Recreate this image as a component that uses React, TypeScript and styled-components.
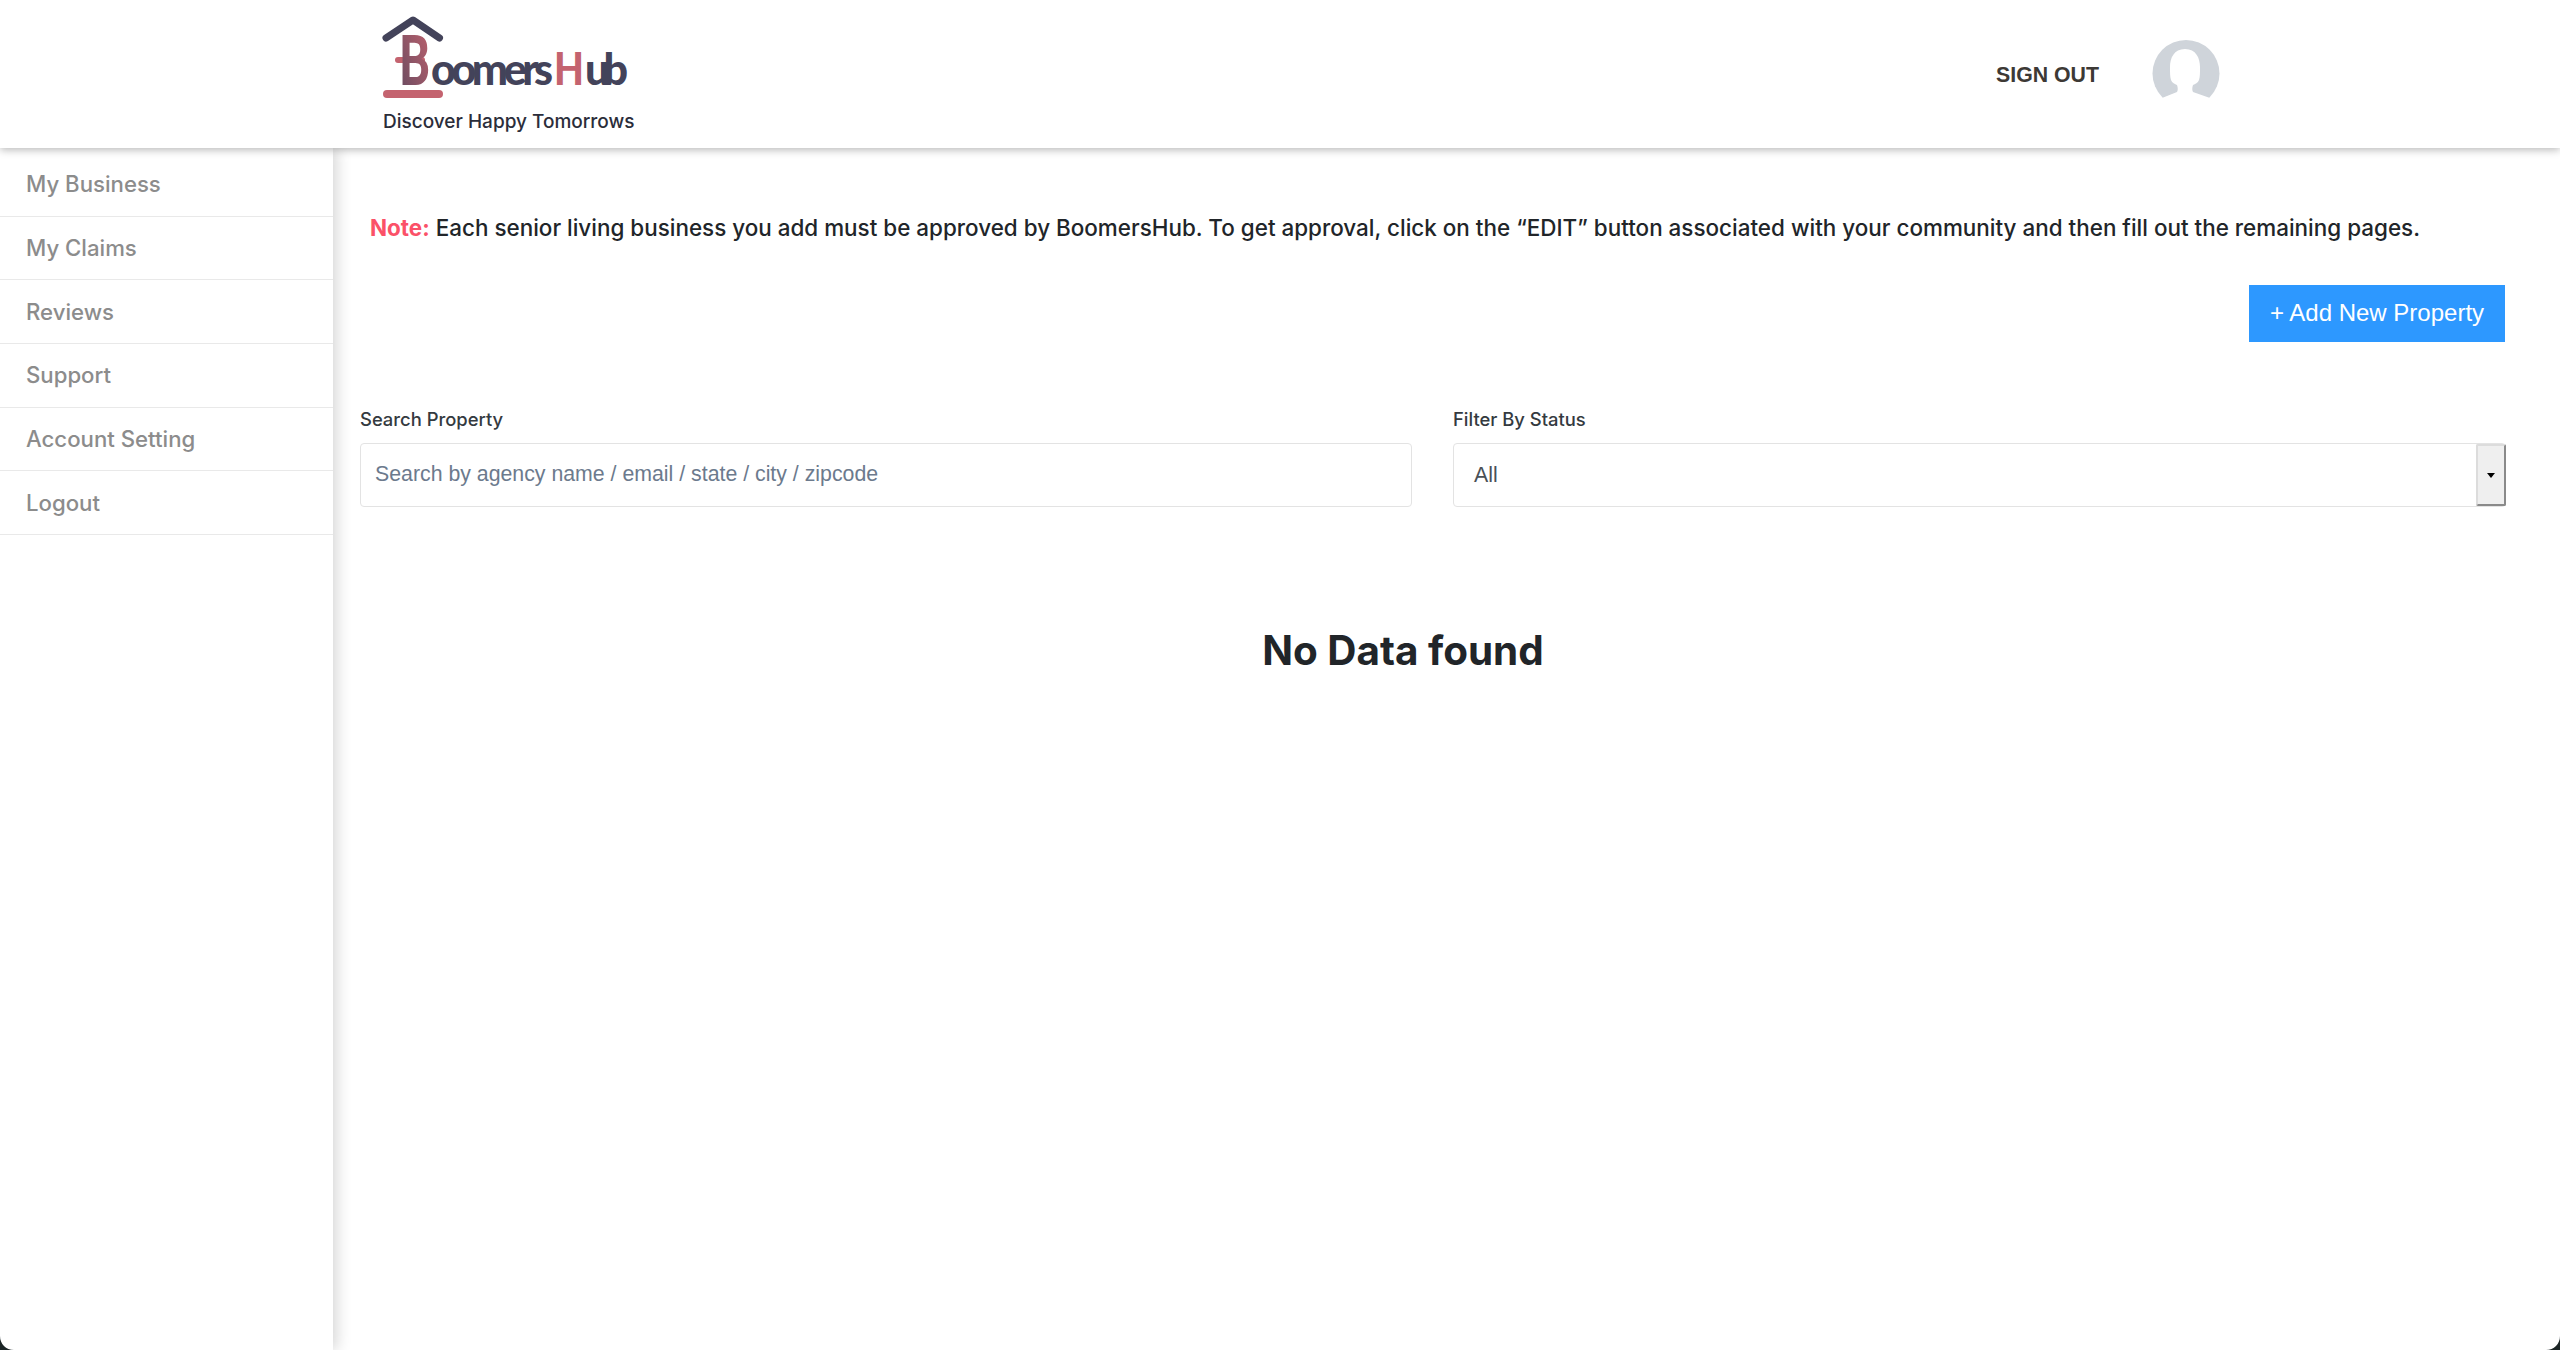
import React from 'react'
import styled, { createGlobalStyle } from 'styled-components'

const menuItems = ['My Business', 'My Claims', 'Reviews', 'Support', 'Account Setting', 'Logout']

const GlobalStyle = createGlobalStyle`
  html, body {
    margin: 0;
    padding: 0;
    background: #fff;
    font-family: 'Inter', 'Liberation Sans', sans-serif;
  }
  * {
    box-sizing: border-box;
  }
`

const Page = styled.div`
  width: 2560px;
  height: 1350px;
  overflow: hidden;
  position: relative;
  display: flex;
  flex-direction: column;
  background: #fff;
`

const Corner = styled.svg<{ $right?: boolean }>`
  position: absolute;
  bottom: 0;
  ${props => (props.$right ? 'right: 0; transform: scaleX(-1);' : 'left: 0;')}
  width: 14px;
  height: 14px;
  z-index: 5;
`

const Header = styled.header`
  height: 148px;
  flex: none;
  position: relative;
  z-index: 3;
  background: #fff;
  box-shadow: 0 2px 8px rgba(0, 0, 0, 0.28);
  display: flex;
  align-items: flex-start;
  padding: 12px 340px 0 380px;
`

const LogoBlock = styled.div`
  display: flex;
  flex-direction: column;
  width: 260px;
`

const Tagline = styled.div`
  font-size: 19px;
  font-weight: 500;
  line-height: 24px;
  color: #2b2d3a;
  margin: 6px 0 0 3px;
  white-space: nowrap;
`

const HeaderRight = styled.div`
  margin-left: auto;
  display: flex;
  align-items: center;
  gap: 53px;
  height: 124px;
`

const SignOut = styled.span`
  font-family: 'Liberation Sans', Arial, sans-serif;
  font-size: 21.3px;
  font-weight: 700;
  color: #3d3935;
  padding-top: 3px;
`

const Body = styled.div`
  flex: 1;
  display: flex;
  min-height: 0;
`

const Sidebar = styled.nav`
  width: 333px;
  flex: none;
  position: relative;
  z-index: 2;
  background: #fff;
  box-shadow: 4px 0 14px rgba(0, 0, 0, 0.16);
  padding-top: 5px;
`

const MenuItem = styled.a`
  display: flex;
  align-items: center;
  height: 63.7px;
  padding: 0 0 1px 26px;
  font-size: 22.2px;
  font-weight: 500;
  color: #8c8c8c;
  border-bottom: 1px solid #e9e9e9;
`

const Main = styled.main`
  flex: 1;
  min-width: 0;
  padding: 65px 54px 0 27px;
`

const Note = styled.p`
  margin: 0 0 0 10px;
  font-size: 22.45px;
  line-height: 30px;
  font-weight: 500;
  color: #212529;
  white-space: nowrap;
`

const NoteLabel = styled.span`
  color: #fb5168;
  font-weight: 700;
`

const Actions = styled.div`
  display: flex;
  justify-content: flex-end;
  margin: 42px 1px 0 0;
`

const AddButton = styled.button`
  width: 256px;
  height: 57px;
  border: 0;
  padding: 0 0 2px;
  background: #2d98ff;
  color: #fff;
  font-family: 'Liberation Sans', Arial, sans-serif;
  font-size: 24px;
`

const Filters = styled.div`
  display: grid;
  grid-template-columns: 1052px 1053px;
  column-gap: 41px;
  margin-top: 65px;
`

const Field = styled.div`
  display: flex;
  flex-direction: column;
`

const Label = styled.label`
  font-size: 18.4px;
  line-height: 24px;
  font-weight: 500;
  color: #343a40;
  margin-bottom: 12px;
  height: 24px;
`

const SearchInput = styled.input`
  height: 64px;
  border: 1px solid #e3e3e3;
  border-radius: 4px;
  padding: 0 14px 1px;
  font-family: 'Liberation Sans', Arial, sans-serif;
  font-size: 21.3px;
  outline: none;

  &::placeholder {
    color: #6c7a8d;
    opacity: 1;
  }
`

const SelectBox = styled.div`
  height: 64px;
  border: 1px solid #e3e3e3;
  border-radius: 4px;
  display: flex;
  align-items: center;
  justify-content: space-between;
  padding-left: 20px;
  font-family: 'Liberation Sans', Arial, sans-serif;
  font-size: 21.3px;
  color: #495057;
`

const SelectArrow = styled.span`
  width: 30px;
  height: 62px;
  margin-right: -1px;
  background: #efefef;
  border: 2px solid;
  border-color: #dcdcdc #8a8a8a #8a8a8a #dcdcdc;
  border-radius: 2px;
  display: flex;
  align-items: center;
  justify-content: center;

  &::after {
    content: '';
    border-top: 5px solid #000;
    border-left: 4px solid transparent;
    border-right: 4px solid transparent;
  }
`

const NoData = styled.h2`
  margin: 119px 60px 0 0;
  text-align: center;
  font-size: 40.4px;
  line-height: 50px;
  font-weight: 700;
  color: #212529;
`

const Logo = () => (
  <svg width="260" height="92" viewBox="0 0 260 92">
    <defs>
      <linearGradient id="bFill" x1="0" y1="1" x2="1" y2="0">
        <stop offset="0" stopColor="#62495f" />
        <stop offset="1" stopColor="#c4636f" />
      </linearGradient>
    </defs>
    <path d="M6 26 L33 8 L59.5 26" fill="none" stroke="#43435a" strokeWidth="7" strokeLinecap="round" strokeLinejoin="round" />
    <path d="M18 48 H42" stroke="#c4636f" strokeWidth="6" strokeLinecap="round" />
    <text x="19" y="73" fontFamily="Lato" fontWeight="900" fontSize="68" fill="url(#bFill)" textLength="31" lengthAdjust="spacingAndGlyphs">B</text>
    <text x="51" y="73" fontFamily="Lato" fontWeight="900" fontSize="43" fill="#43435a" textLength="122">oomers</text>
    <text x="174" y="73" fontFamily="Lato" fontWeight="900" fontSize="46" fill="#c4636f" textLength="30" lengthAdjust="spacingAndGlyphs">H</text>
    <text x="205" y="73" fontFamily="Lato" fontWeight="900" fontSize="43" fill="#43435a" textLength="43">ub</text>
    <path d="M7 82 H59" stroke="#c4636f" strokeWidth="8" strokeLinecap="round" />
  </svg>
)

const Avatar = () => (
  <svg width="68" height="68" viewBox="0 0 68 68">
    <circle cx="34" cy="33.5" r="33.5" fill="#cfd4da" />
    <path d="M33 9 C44 9 48 18 48 27 C48 33 48 37 47 40 C46 43 43 44 41 45 C40 48 40 50 41 52 L58 58 L58 68 L10 68 L10 58 L25 52 C26 50 26 48 25 45 C23 44 20 43 19 40 C18 37 18 33 18 27 C18 18 22 9 33 9 Z" fill="#fff" />
  </svg>
)

export default function App() {
  return (
    <Page>
      <GlobalStyle />
      <Header>
        <LogoBlock>
          <Logo />
          <Tagline>Discover Happy Tomorrows</Tagline>
        </LogoBlock>
        <HeaderRight>
          <SignOut>SIGN OUT</SignOut>
          <Avatar />
        </HeaderRight>
      </Header>
      <Body>
        <Sidebar>
          {menuItems.map(item => (
            <MenuItem key={item}>{item}</MenuItem>
          ))}
        </Sidebar>
        <Main>
          <Note>
            <NoteLabel>Note:</NoteLabel> Each senior living business you add must be approved by BoomersHub. To get approval, click on the “EDIT” button associated with your community and then fill out the remaining pages.
          </Note>
          <Actions>
            <AddButton>+ Add New Property</AddButton>
          </Actions>
          <Filters>
            <Field>
              <Label>Search Property</Label>
              <SearchInput placeholder="Search by agency name / email / state / city / zipcode" />
            </Field>
            <Field>
              <Label>Filter By Status</Label>
              <SelectBox>
                All
                <SelectArrow />
              </SelectBox>
            </Field>
          </Filters>
          <NoData>No Data found</NoData>
        </Main>
      </Body>
      <Corner viewBox="0 0 14 14"><path d="M0 0 C0 8 6 14 14 14 H0 Z" fill="#1c2526" /></Corner>
      <Corner $right viewBox="0 0 14 14"><path d="M0 0 C0 8 6 14 14 14 H0 Z" fill="#1c2526" /></Corner>
    </Page>
  )
}
